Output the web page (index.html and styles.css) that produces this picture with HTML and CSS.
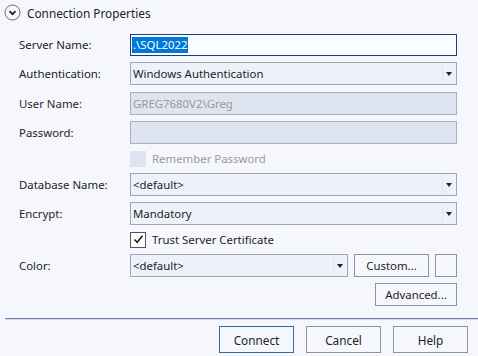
FILE: index.html
```html
<!DOCTYPE html>
<html lang="en">
<head>
    <meta charset="UTF-8">
    <title>Connection Properties</title>
    <link rel="stylesheet" href="styles.css">
</head>
<body>
    <section id="dialog">
        <header class="head">
            <svg class="toggle" width="17" height="17" viewBox="0 0 17 17">
                <circle cx="8.5" cy="8.5" r="7.5" fill="none" stroke="#6b6b6b" stroke-width="1"/>
                <path d="M5.5 7.2 L8.5 10.2 L11.5 7.2" fill="none" stroke="#1e1e1e" stroke-width="1.8"/>
            </svg>
            <span>Connection Properties</span>
        </header>

        <div class="form">
            <div class="row">
                <label>Server Name:</label>
                <div class="field text focus"><span class="sel">.\SQL2022</span></div>
            </div>
            <div class="row">
                <label>Authentication:</label>
                <div class="field combo"><span class="val">Windows Authentication</span><i class="drop"></i></div>
            </div>
            <div class="row gap7">
                <label class="dim">User Name:</label>
                <div class="field text off"><span class="val">GREG7680V2\Greg</span></div>
            </div>
            <div class="row">
                <label>Password:</label>
                <div class="field text off"></div>
            </div>
            <div class="row check">
                <label></label>
                <div class="cb off"></div>
                <span class="cbText off">Remember Password</span>
            </div>
            <div class="row">
                <label>Database Name:</label>
                <div class="field combo"><span class="val">&lt;default&gt;</span><i class="drop"></i></div>
            </div>
            <div class="row">
                <label>Encrypt:</label>
                <div class="field combo"><span class="val">Mandatory</span><i class="drop"></i></div>
            </div>
            <div class="row check">
                <label></label>
                <div class="cb">
                    <svg width="11" height="11" viewBox="0 0 11 11"><path d="M1.5 5.5 L4.2 8.3 L9.5 1.8" fill="none" stroke="#1a1a1a" stroke-width="1.5"/></svg>
                </div>
                <span class="cbText">Trust Server Certificate</span>
            </div>
            <div class="row">
                <label>Color:</label>
                <div class="field combo color"><span class="val">&lt;default&gt;</span><i class="drop"></i></div>
                <button class="btn custom">Custom...</button>
                <div class="swatch"></div>
            </div>
            <div class="row right">
                <button class="btn adv">Advanced...</button>
            </div>
        </div>

        <div class="sep"></div>

        <footer class="foot">
            <button class="btn big def">Connect</button>
            <button class="btn big">Cancel</button>
            <button class="btn big">Help</button>
        </footer>
    </section>
</body>
</html>
```
FILE: styles.css
```css
/*reset*/
html,body{margin: 0;padding: 0;height: 100%;overflow: hidden;}
body{background: #f5f7fc;font: 11.4px "Segoe UI","Noto Sans","Open Sans",sans-serif;color: #1e1e1e;}
button{font: inherit;color: inherit;}

#dialog{
    width: 478px;
    height: 356px;
    box-sizing: border-box;
}

.head{
    display: flex;
    align-items: center;
    height: 17px;
    padding: 4px 0 0 4px;
}
.head .toggle{display: block;}
.head span{margin-left: 6px;font-size: 11.8px;}

.form{
    display: flex;
    flex-direction: column;
    gap: 6px;
    padding: 12px 21px 0 19px;
}

.row{
    display: flex;
    align-items: center;
    height: 23px;
}
.row.gap7{margin-top: 1px;}
.row.check{height: 17px;}
.row.right{justify-content: flex-end;}

.row label{
    width: 111px;
    flex: none;
}
.row label.dim{color: #2a2a2a;}

.field{
    flex: 1;
    height: 23px;
    box-sizing: border-box;
    border: 1px solid #9ea6b6;
    display: flex;
    align-items: center;
    padding-left: 2px;
    position: relative;
}
.field.focus{border-color: #1f3c78;background: #fbfcff;height: 22px;padding-left: 1px;}
.field .sel{background: #0078d7;color: #fff;padding: 0 1px;line-height: 16px;}
.field.off{background: #dfe5f0;border-color: #a8b0c0;color: #9a9a9a;}
.field.combo{background: #eef1f9;padding-left: 2px;}
.field .val{flex: 1;white-space: nowrap;}
.field .drop{
    width: 13px;
    height: 100%;
    border-left: 1px solid #e2e6ee;
    position: relative;
    flex: none;
}
.field .drop:after{
    content: "";
    position: absolute;
    left: 3px;
    top: 9px;
    border-left: 3.5px solid transparent;
    border-right: 3.5px solid transparent;
    border-top: 4px solid #222;
}

.cb{
    width: 14px;
    height: 14px;
    border: 1px solid #555;
    background: #fff;
    display: flex;
    align-items: center;
    justify-content: center;
    flex: none;
}
.cb.off{border-color: #dde4ef;background: #dde4ef;}
.cbText{margin-left: 6px;}
.cbText.off{color: #9a9a9a;}

.btn{
    height: 23px;
    box-sizing: border-box;
    border: 1px solid #8a93a6;
    background: #f5f7fc;
    padding: 0;
}
.custom{width: 75px;margin-left: 6px;}
.swatch{
    width: 22px;
    height: 23px;
    box-sizing: border-box;
    border: 1px solid #8a93a6;
    margin-left: 6px;
}
.adv{width: 82px;}
.color{flex: none;width: 218px;}

.sep{
    margin: 12px 0 0 5px;
    height: 1px;
    background: #7483b3;
    border-bottom: 1px solid #d3daeb;
}

.foot{
    display: flex;
    justify-content: flex-end;
    gap: 12px;
    padding: 6px 10px 0 0;
}
.btn.big{width: 75px;height: 27px;font-size: 11.8px;}
.btn.def{border-color: #2d6cb0;}
```
